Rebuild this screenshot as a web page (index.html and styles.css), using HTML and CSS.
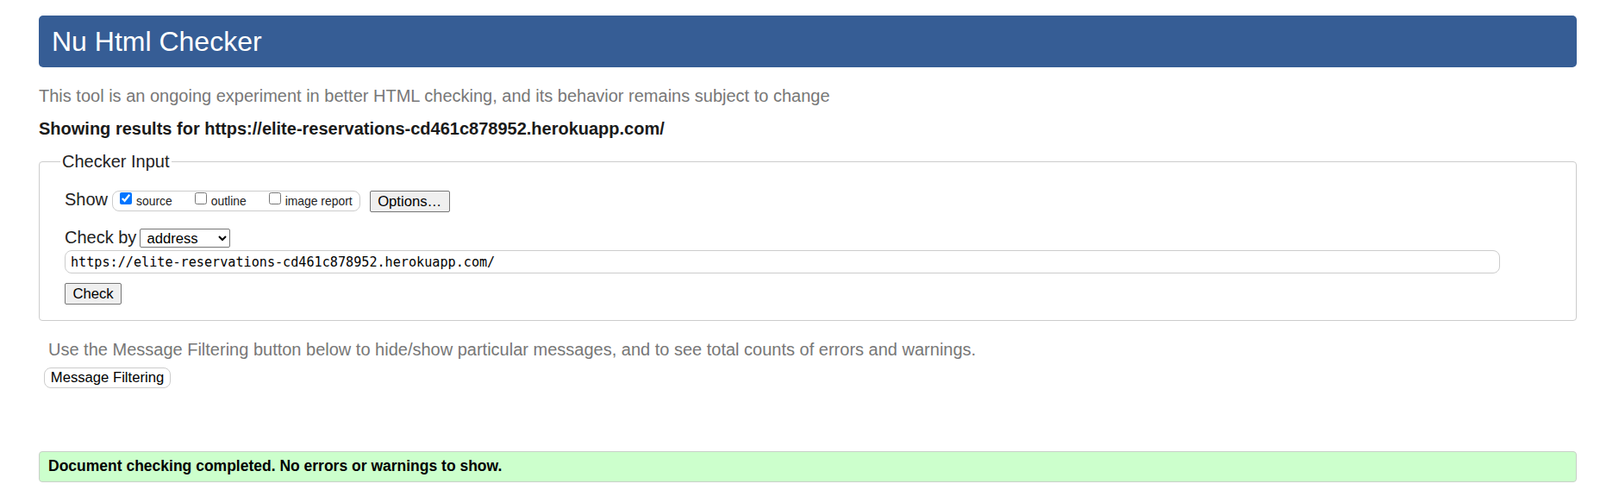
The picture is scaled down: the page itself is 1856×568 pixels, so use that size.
FILE: index.html
```html
<!DOCTYPE html>
<html lang="en">
<head>
<meta charset="utf-8">
<title>Nu Html Checker</title>
<link rel="stylesheet" href="styles.css">
</head>
<body>
<h1 class="title">Nu Html Checker</h1>
<p class="intro">This tool is an ongoing experiment in better HTML checking, and its behavior remains subject to change</p>
<p class="showing">Showing results for https://elite-reservations-cd461c878952.herokuapp.com/</p>
<form class="checker">
  <fieldset class="input-set">
    <legend class="legend">Checker Input</legend>
    <div class="row row-show">
      <span class="row-label">Show</span>
      <div class="show-group">
        <label class="opt"><input type="checkbox" class="cb" checked><span class="opt-text">source</span></label>
        <label class="opt"><input type="checkbox" class="cb"><span class="opt-text">outline</span></label>
        <label class="opt"><input type="checkbox" class="cb"><span class="opt-text">image report</span></label>
      </div>
      <button type="button" class="btn btn-options">Options…</button>
    </div>
    <div class="row row-by">
      <span class="row-label">Check by</span>
      <select class="by-select"><option>address</option></select>
    </div>
    <input type="text" class="url" value="https://elite-reservations-cd461c878952.herokuapp.com/">
    <button type="button" class="btn btn-check">Check</button>
  </fieldset>
</form>
<p class="filter-note">Use the Message Filtering button below to hide/show particular messages, and to see total counts of errors and warnings.</p>
<button type="button" class="btn-filter">Message Filtering</button>
<div class="success">Document checking completed. No errors or warnings to show.</div>
</body>
</html>
```
FILE: styles.css
```css
html, body {
  background: #fff;
}
body {
  margin: 0;
  padding: 18px 27px 0 45px;
  font-family: "Liberation Sans", Arial, Helvetica, sans-serif;
  color: #222;
}
.title {
  margin: 0;
  height: 60px;
  line-height: 60px;
  padding: 0 15px;
  font-size: 32px;
  font-weight: normal;
  background: #365d95;
  color: #fff;
  border-radius: 5px;
}
.intro {
  margin: 22px 0 0;
  font-size: 20px;
  line-height: 23px;
  color: #777;
}
.showing {
  margin: 15px 0 0;
  font-size: 20px;
  line-height: 23px;
  font-weight: bold;
  color: #1a1a1a;
}
.checker {
  margin: 0;
}
.input-set {
  margin: 15px 0 0;
  padding: 22px 88px 18px 29px;
  border: 1px solid #ccc;
  border-radius: 4px;
  min-width: 0;
}
.legend {
  padding: 0 2px;
  margin-left: -5px;
  font-size: 20px;
  line-height: 23px;
  color: #222;
}
.row {
  display: flex;
  align-items: flex-start;
}
.row-label {
  font-size: 20px;
  line-height: 20px;
  color: #222;
}
.show-group {
  display: flex;
  align-items: flex-start;
  gap: 26px;
  box-sizing: border-box;
  height: 24px;
  margin: 0 0 0 5px;
  padding: 0 8px 0 8px;
  border: 1px solid #ccc;
  border-radius: 8px;
}
.opt {
  display: flex;
  align-items: flex-start;
}
.cb {
  width: 14px;
  height: 14px;
  margin: 1px 5px 0 0;
}
.opt-text {
  margin-top: 4px;
  font-size: 13.9px;
  line-height: 14px;
  color: #222;
}
.btn {
  box-sizing: border-box;
  font-family: "Liberation Sans", Arial, sans-serif;
  font-size: 16.67px;
  color: #000;
  background: #efefef;
  border: 1px solid #767676;
  border-radius: 2px;
  padding: 0;
}
.btn-options {
  width: 93px;
  height: 25px;
  margin-left: 11px;
}
.row-by {
  margin-top: 19px;
}
.by-select {
  box-sizing: border-box;
  width: 105px;
  height: 22px;
  margin: 0 0 0 4px;
  padding: 0 0 0 3px;
  font-family: "Liberation Sans", Arial, sans-serif;
  font-size: 16.67px;
  color: #000;
  background: #fff;
  border: 1px solid #767676;
  border-radius: 2px;
}
.url {
  display: block;
  box-sizing: border-box;
  width: 100%;
  height: 27px;
  margin: 3px 0 0;
  padding: 0 6px;
  font-family: "DejaVu Sans Mono", "Liberation Mono", monospace;
  font-size: 15.15px;
  color: #000;
  border: 1px solid #ccc;
  border-radius: 8px;
  background: #fff;
}
.btn-check {
  display: block;
  width: 66px;
  height: 25px;
  margin-top: 11px;
}
.filter-note {
  margin: 22px 0 0 11px;
  font-size: 20px;
  line-height: 23px;
  color: #777;
}
.btn-filter {
  display: block;
  box-sizing: border-box;
  width: 147px;
  height: 24px;
  margin: 9px 0 0 6px;
  padding: 0;
  font-family: "Liberation Sans", Arial, sans-serif;
  font-size: 16.67px;
  color: #000;
  background: #fff;
  border: 1px solid #ccc;
  border-radius: 8px;
}
.success {
  margin-top: 73px;
  padding: 7px 10px 8px 10px;
  font-size: 17.5px;
  line-height: 19px;
  font-weight: bold;
  color: #000;
  background: #ccffcc;
  border: 1px solid #c8d0c8;
  border-radius: 4px;
}
```
